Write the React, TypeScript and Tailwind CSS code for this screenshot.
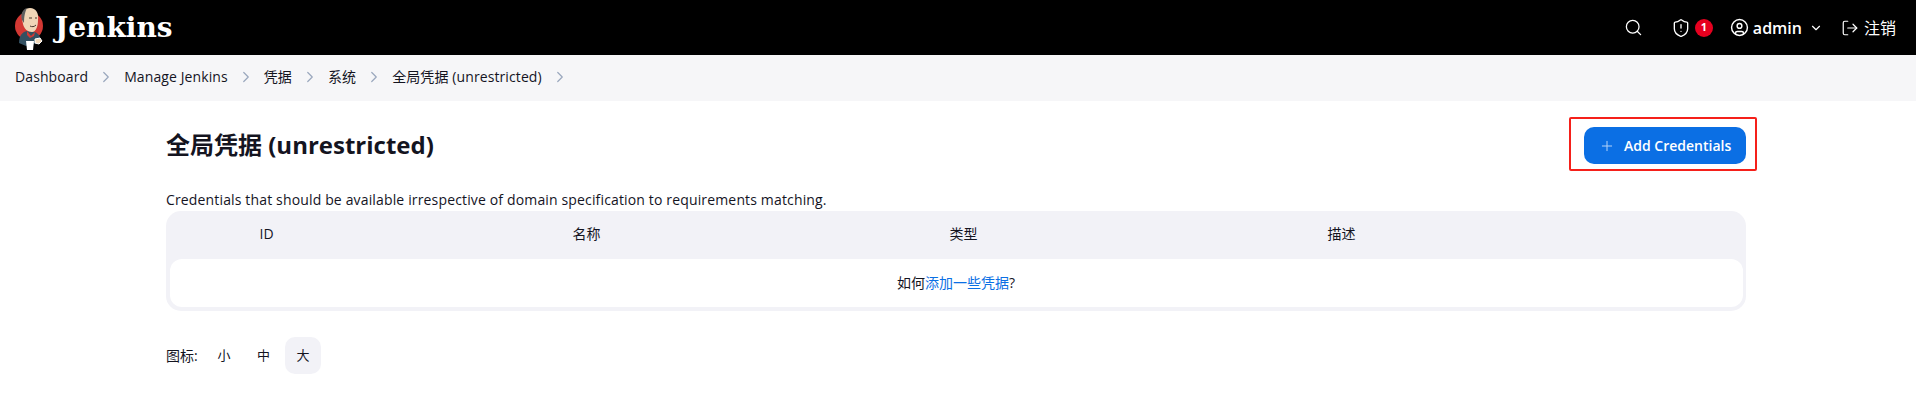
import { ChevronDown, ChevronRight, CircleUser, LogOut, Plus, Search, ShieldAlert } from "lucide-react";

const crumbs = ["Dashboard", "Manage Jenkins", "凭据", "系统", "全局凭据 (unrestricted)"];

function JenkinsLogo() {
    return (
        <svg width="32" height="46" viewBox="0 0 32 46" className="shrink-0">
            <circle cx="15" cy="21" r="14" fill="#d33833" />
            <path d="M5 38 C5 31 8 27 13 26 L21 27 C25 29 27 32 27 37 L12 41 Z" fill="#335061" />
            <path d="M13 26 L17 31 L21 27 L20 31 L16 33 L13 30 Z" fill="#d33833" />
            <path d="M8 14 C7 7 11 3 16 3 C22 3 25 8 24 15 C24 21 22 27 18 27 C14 27 10 24 9 19 Z" fill="#f0d6b7" />
            <path d="M8 15 C6 9 9 4 13 3 C11 7 10 11 10 18 Z" fill="#5f5f5f" />
            <path d="M15 13 h3 M21 13 h2" stroke="#49392f" strokeWidth="1.2" />
            <path d="M16 21 C18 22 20 22 22 20" stroke="#49392f" strokeWidth="1" fill="none" />
            <path d="M12 36 h8 l-1 9 h-6 Z" fill="#ffffff" />
            <path d="M21 34 l5 -1 l2 3 l-3 3 l-4 -1 Z" fill="#f0d6b7" stroke="#ffffff" strokeWidth="1" />
        </svg>
    );
}

export default function App() {
    return (
        <div className="flex h-[420px] flex-col bg-white text-[#14141f] font-['Open_Sans','Noto_Sans_CJK_SC',sans-serif]">
            <header className="flex h-[55px] shrink-0 items-center bg-black pl-[14px] pr-[20px] text-white">
                <JenkinsLogo />
                <span className="ml-[9px] font-['DejaVu_Serif',serif] text-[28px] font-bold">Jenkins</span>
                <div className="ml-auto flex items-center">
                    <Search size={19} strokeWidth={1.6} />
                    <ShieldAlert size={20} strokeWidth={1.6} className="ml-[28px]" />
                    <span className="ml-[4px] flex h-[18px] w-[18px] items-center justify-center rounded-full bg-[#e6001f] text-[11px] font-bold">1</span>
                    <CircleUser size={19} strokeWidth={1.8} className="ml-[17px]" />
                    <span className="ml-[4px] text-[16px] font-semibold">admin</span>
                    <ChevronDown size={14} strokeWidth={2} className="ml-[7px]" />
                    <LogOut size={18} strokeWidth={1.6} className="ml-[18px]" />
                    <span className="ml-[5px] text-[16px]">注销</span>
                </div>
            </header>

            <nav className="flex h-[46px] shrink-0 items-center bg-[#f6f6f8] pb-[3px] pl-[15px] text-[14px] tracking-[0.1px]">
                {crumbs.map((crumb) => (
                    <div key={crumb} className="flex items-center">
                        <span>{crumb}</span>
                        <ChevronRight size={18} strokeWidth={1.6} className="mx-[9px] text-[#9aa7bd]" />
                    </div>
                ))}
            </nav>

            <main className="mr-[170px] ml-[166px] flex flex-col">
                <div className="mt-[26px] flex h-[37px] items-center justify-between">
                    <h1 className="pb-[2px] text-[24px] font-bold">全局凭据 (unrestricted)</h1>
                    <div className="relative">
                        <button className="flex h-[37px] w-[162px] items-center rounded-[10px] bg-[#0b6fe4] pl-[15px] text-[14px] font-semibold text-white">
                            <Plus size={16} strokeWidth={1.5} className="text-[#b5d4f8]" />
                            <span className="ml-[9px]">Add Credentials</span>
                        </button>
                        <div className="absolute -top-[10px] -right-[11px] -bottom-[7px] -left-[15px] rounded-[2px] border-[2.5px] border-[#f5201a]" />
                    </div>
                </div>

                <p className="mt-[26px] h-[21px] text-[14px] leading-[20px] tracking-[0.15px]">
                    Credentials that should be available irrespective of domain specification to requirements matching.
                </p>

                <div className="h-[100px] rounded-[15px] bg-[#f2f2f7] px-[3.5px] pb-[3.5px]">
                    <div className="grid h-[48px] grid-cols-[90px_313px_377px_378px_1fr] items-center pb-[3px] text-[14px]">
                        <span />
                        <span>ID</span>
                        <span>名称</span>
                        <span>类型</span>
                        <span>描述</span>
                    </div>
                    <div className="flex h-[48px] items-center justify-center rounded-[12px] bg-white pb-[2px] text-[14px]">
                        如何<span className="text-[#0b6fe4]">添加一些凭据</span>?
                    </div>
                </div>

                <div className="mt-[26px] flex items-center text-[14px]">
                    <span className="w-[40px]">图标:</span>
                    <div className="flex gap-[3.5px] text-[13px]">
                        <span className="flex h-[37px] w-[36px] items-center justify-center">小</span>
                        <span className="flex h-[37px] w-[36px] items-center justify-center">中</span>
                        <span className="flex h-[37px] w-[36px] items-center justify-center rounded-[10px] bg-[#f2f2f7]">大</span>
                    </div>
                </div>
            </main>
        </div>
    );
}
